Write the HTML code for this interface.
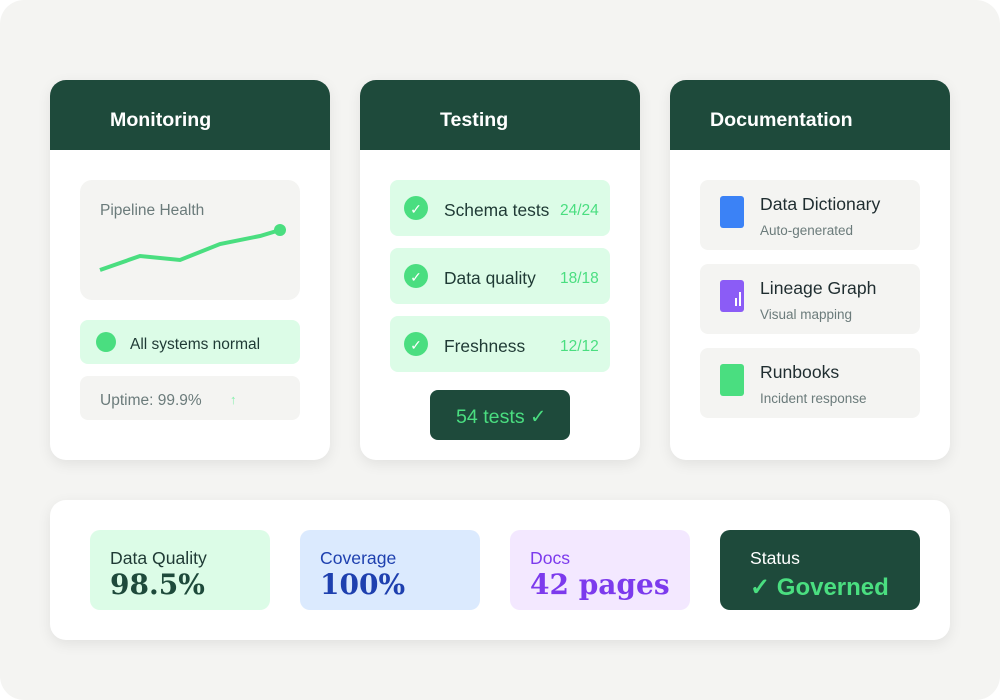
<!DOCTYPE html>
<html><head><style>
*{margin:0;padding:0;box-sizing:border-box}
html{background:#fff}
body{width:1000px;height:700px;background:#f4f4f2;font-family:"Liberation Sans",sans-serif;position:relative;overflow:hidden;border-radius:24px}
.card{position:absolute;top:80px;width:280px;height:380px;background:#fff;border-radius:16px;box-shadow:0 4px 14px rgba(0,0,0,.08);overflow:hidden}
.hd{height:70px;background:#1e4a3b;color:#fff;font-weight:bold;font-size:19.6px;padding:29px 0 0 60px}
.abs{position:absolute}
.box{position:absolute;border-radius:8px}
.t{position:absolute;white-space:nowrap}
.num{position:absolute;white-space:nowrap;left:20px;top:38px;font-size:28px;font-weight:bold;font-family:"DejaVu Serif",serif}
.chk{position:absolute;left:14px;width:24px;height:24px;border-radius:50%;background:#4ade80;color:#fff;font-size:14px;text-align:center;line-height:26px}
</style></head><body>
<div class="card" style="left:50px"><div class="hd">Monitoring</div>
 <div class="box" style="left:30px;top:100px;width:220px;height:120px;background:#f4f4f2;border-radius:12px">
  <div class="t" style="left:20px;top:22px;font-size:15.5px;color:#6b7b7b">Pipeline Health</div>
  <svg class="abs" style="left:0;top:0" width="220" height="120"><polyline points="20,90 60,76 100,80 140,64 180,56 200,50" fill="none" stroke="#4ade80" stroke-width="4"/><circle cx="200" cy="50" r="6" fill="#4ade80"/></svg>
 </div>
 <div class="box" style="left:30px;top:240px;width:220px;height:44px;background:#dcfce7">
  <div class="abs" style="left:16px;top:12px;width:20px;height:20px;border-radius:50%;background:#4ade80"></div>
  <div class="t" style="left:50px;top:16px;font-size:15.5px;color:#1f3a35">All systems normal</div></div>
 <div class="box" style="left:30px;top:296px;width:220px;height:44px;background:#f4f4f2">
  <div class="t" style="left:20px;top:16px;font-size:15.5px;color:#6b7b7b">Uptime: 99.9%</div>
  <div class="t" style="left:150px;top:16px;font-size:13px;color:#86efac">↑</div></div>
</div>
<div class="card" style="left:360px"><div class="hd" style="padding-left:80px">Testing</div>
 <div class="box" style="left:30px;top:100px;width:220px;height:56px;background:#dcfce7"><div class="chk" style="top:16px">✓</div><div class="t" style="left:54px;top:20px;font-size:17.4px;color:#1f3a35">Schema tests</div><div class="t" style="left:170px;top:22px;font-size:15.5px;color:#4ade80">24/24</div></div>
 <div class="box" style="left:30px;top:168px;width:220px;height:56px;background:#dcfce7"><div class="chk" style="top:16px">✓</div><div class="t" style="left:54px;top:20px;font-size:17.4px;color:#1f3a35">Data quality</div><div class="t" style="left:170px;top:22px;font-size:15.5px;color:#4ade80">18/18</div></div>
 <div class="box" style="left:30px;top:236px;width:220px;height:56px;background:#dcfce7"><div class="chk" style="top:16px">✓</div><div class="t" style="left:54px;top:20px;font-size:17.4px;color:#1f3a35">Freshness</div><div class="t" style="left:170px;top:22px;font-size:15.5px;color:#4ade80">12/12</div></div>
 <div class="box" style="left:70px;top:310px;width:140px;height:50px;background:#1e4a3b"><div class="t" style="left:26px;top:15px;font-size:19.6px;color:#4ade80">54 tests ✓</div></div>
</div>
<div class="card" style="left:670px"><div class="hd" style="padding-left:40px">Documentation</div>
 <div class="box" style="left:30px;top:100px;width:220px;height:70px;background:#f4f4f2"><div class="abs" style="left:20px;top:16px;width:24px;height:32px;border-radius:3px;background:#3b82f6"></div><div class="t" style="left:60px;top:14px;font-size:17.6px;color:#1f2d30">Data Dictionary</div><div class="t" style="left:60px;top:43px;font-size:13.5px;color:#6b7b7b">Auto-generated</div></div>
 <div class="box" style="left:30px;top:184px;width:220px;height:70px;background:#f4f4f2"><div class="abs" style="left:20px;top:16px;width:24px;height:32px;border-radius:3px;background:#8b5cf6"><div class="abs" style="left:15px;top:18px;width:2px;height:8px;background:#fff"></div><div class="abs" style="left:19px;top:12px;width:2px;height:14px;background:#fff"></div></div><div class="t" style="left:60px;top:14px;font-size:17.6px;color:#1f2d30">Lineage Graph</div><div class="t" style="left:60px;top:43px;font-size:13.5px;color:#6b7b7b">Visual mapping</div></div>
 <div class="box" style="left:30px;top:268px;width:220px;height:70px;background:#f4f4f2"><div class="abs" style="left:20px;top:16px;width:24px;height:32px;border-radius:3px;background:#4ade80"></div><div class="t" style="left:60px;top:14px;font-size:17.6px;color:#1f2d30">Runbooks</div><div class="t" style="left:60px;top:43px;font-size:13.5px;color:#6b7b7b">Incident response</div></div>
</div>
<div class="abs" style="left:50px;top:500px;width:900px;height:140px;background:#fff;border-radius:16px;box-shadow:0 4px 14px rgba(0,0,0,.08)">
 <div class="box" style="left:40px;top:30px;width:180px;height:80px;background:#dcfce7;border-radius:10px"><div class="t" style="left:20px;top:18px;font-size:17.6px;color:#1f3a35">Data Quality</div><div class="num" style="color:#1e4a3b">98.5%</div></div>
 <div class="box" style="left:250px;top:30px;width:180px;height:80px;background:#dbeafe;border-radius:10px"><div class="t" style="left:20px;top:18px;font-size:17.6px;color:#1e40af">Coverage</div><div class="num" style="color:#1e40af">100%</div></div>
 <div class="box" style="left:460px;top:30px;width:180px;height:80px;background:#f3e8ff;border-radius:10px"><div class="t" style="left:20px;top:18px;font-size:17.6px;color:#7c3aed">Docs</div><div class="num" style="color:#7c3aed">42 pages</div></div>
 <div class="box" style="left:670px;top:30px;width:200px;height:80px;background:#1e4a3b;border-radius:10px"><div class="t" style="left:30px;top:18px;font-size:17.6px;color:#fff">Status</div><div class="t" style="left:30px;top:43px;font-size:24px;font-weight:bold;color:#4ade80">✓ Governed</div></div>
</div>
</body></html>
